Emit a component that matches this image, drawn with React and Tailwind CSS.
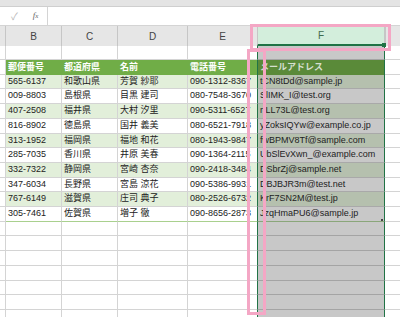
import React from 'react'

const rows = [
  ['565-6137', '和歌山県', '芳賀 紗耶', '090-1312-8367', 'tCN8tDd@sample.jp'],
  ['009-8803', '島根県', '目黒 建司', '080-7548-3670', 'SlIMK_I@test.org'],
  ['407-2508', '福井県', '大村 汐里', '090-5311-6527', 'rtLL73L@test.org'],
  ['816-8902', '徳島県', '国井 義美', '080-6521-7918', 'yZoksIQYw@example.co.jp'],
  ['313-1952', '福岡県', '福地 和花', '080-1943-9847', 'fwBPMV8Tf@sample.com'],
  ['285-7035', '香川県', '井原 美春', '090-1364-2115', 'UbSlEvXwn_@example.com'],
  ['332-7322', '静岡県', '宮崎 杏奈', '090-2418-3484', 'DSbrZj@sample.net'],
  ['347-6034', '長野県', '宮島 涼花', '090-5386-9931', 'DBJBJR3m@test.net'],
  ['767-6149', '滋賀県', '庄司 典子', '080-2526-6732', 'KrF7SN2M@test.jp'],
  ['305-7461', '佐賀県', '増子 徹', '090-8656-2873', 'JzqHmaPU6@sample.jp'],
]

// data row heights (Excel rows are ~14.7px, so alternate 14/15)
const dataH = ['h-[14px]', 'h-[15px]', 'h-[15px]', 'h-[15px]', 'h-[14px]', 'h-[15px]', 'h-[15px]', 'h-[14px]', 'h-[15px]', 'h-[15px]']
const emptyH = ['h-[14px]', 'h-[15px]', 'h-[15px]', 'h-[15px]', 'h-[14px]', 'h-[15px]', 'h-[15px]']

const txt = 'flex shrink-0 items-center overflow-hidden whitespace-nowrap px-[2px]'

function EmptyRow({ h }) {
  return (
    <div className={`flex ${h}`}>
      <div className="w-[6px] shrink-0 border-r border-b border-[#d4d4d4] bg-white" />
      <div className="w-[56px] shrink-0 border-r border-b border-[#d4d4d4] bg-white" />
      <div className="w-[56px] shrink-0 border-r border-b border-[#d4d4d4] bg-white" />
      <div className="w-[70px] shrink-0 border-r border-b border-[#d4d4d4] bg-white" />
      <div className="w-[69px] shrink-0 border-b border-[#d4d4d4] bg-white" />
      <div className="w-[128px] shrink-0 border-x border-b border-x-[#217346] border-b-[#a4a4a4] bg-[#c8c8c8]" />
      <div className="w-[15px] shrink-0 border-b border-[#d4d4d4] bg-white" />
    </div>
  )
}

function DataRow({ r, i }) {
  const green = i % 2 === 0
  const last = i === rows.length - 1
  const bg = green ? 'bg-[#e2efda]' : 'bg-white'
  const bb = last ? 'border-b-[#a9d08e]' : 'border-b-[#d4d4d4]'
  return (
    <div className={`flex ${dataH[i]}`}>
      <div className="w-[6px] shrink-0 border-r border-b border-[#d4d4d4] bg-white" />
      <div className={`${txt} w-[56px] border-r border-b border-r-[#d4d4d4] ${bb} ${bg}`}>{r[0]}</div>
      <div className={`${txt} w-[56px] border-r border-b border-r-[#d4d4d4] ${bb} ${bg}`}>{r[1]}</div>
      <div className={`${txt} w-[70px] border-r border-b border-r-[#d4d4d4] ${bb} ${bg}`}>{r[2]}</div>
      <div className={`${txt} w-[69px] border-b ${bb} ${bg}`}>{r[3]}</div>
      <div
        className={`${txt} w-[128px] border-x border-b border-x-[#217346] ${last ? 'border-b-[#8aa67a]' : 'border-b-[#a9a9a9]'} ${green ? 'bg-[#b5c0ae]' : 'bg-[#c8c8c8]'}`}
      >
        {r[4]}
      </div>
      <div className="w-[15px] shrink-0 border-b border-[#d4d4d4] bg-white" />
    </div>
  )
}

export default function App() {
  return (
    <div className="relative h-[317px] w-[400px] overflow-hidden bg-white font-['Liberation_Sans','Noto_Sans_CJK_JP',sans-serif] text-[9px] text-[#222]">
      {/* ribbon edge */}
      <div className="h-[7px] border-b border-[#cfcfcf] bg-[#e4e4e4]" />

      {/* formula bar */}
      <div className="flex h-[19px] border-b border-[#d4d4d4] bg-white">
        <div className="flex w-[48px] shrink-0 items-center border-r border-[#d4d4d4]">
          <span className="ml-[11px] text-[10px] text-[#b4b4b4]">✓</span>
          <span className="ml-[15px] font-['Liberation_Serif',serif] text-[9px] italic text-[#666]">
            f<span className="text-[7px]">x</span>
          </span>
        </div>
        <div className="flex-1" />
      </div>

      {/* column headers */}
      <div className="flex h-[20px] bg-[#e6e6e6] text-[10px] text-[#444]">
        <div className="w-[6px] shrink-0 border-r border-[#c6c6c6]" />
        <div className="flex w-[56px] shrink-0 items-center justify-center border-r border-[#c6c6c6]">B</div>
        <div className="flex w-[56px] shrink-0 items-center justify-center border-r border-[#c6c6c6]">C</div>
        <div className="flex w-[70px] shrink-0 items-center justify-center border-r border-[#c6c6c6]">D</div>
        <div className="flex w-[69px] shrink-0 items-center justify-center">E</div>
        <div className="flex w-[128px] shrink-0 items-center justify-center border-x border-b-2 border-x-[#c6c6c6] border-b-[#217346] bg-[#d3eedc] text-[#3f6b4f]">
          F
        </div>
        <div className="w-[15px] shrink-0 border-l border-[#c6c6c6]" />
      </div>

      {/* row 1 (blank) */}
      <EmptyRow h="h-[14px]" />

      {/* table header */}
      <div className="flex h-[15px] font-bold text-white">
        <div className="w-[6px] shrink-0 border-r border-b border-[#d4d4d4] bg-white" />
        <div className={`${txt} w-[56px] bg-[#70ad47]`}>郵便番号</div>
        <div className={`${txt} w-[56px] bg-[#70ad47]`}>都道府県</div>
        <div className={`${txt} w-[70px] bg-[#70ad47]`}>名前</div>
        <div className={`${txt} w-[69px] bg-[#70ad47]`}>電話番号</div>
        <div className={`${txt} w-[128px] border-x border-x-[#217346] bg-[#5a8a39] text-[#d5dfcf]`}>メールアドレス</div>
        <div className="w-[15px] shrink-0 border-b border-[#d4d4d4] bg-white" />
      </div>

      {rows.map((r, i) => (
        <DataRow key={i} r={r} i={i} />
      ))}

      {emptyH.map((h, i) => (
        <EmptyRow key={i} h={h} />
      ))}

      {/* selection handles */}
      <div className="absolute left-[382px] top-[43px] h-[4px] w-[4px] bg-[#217346]" />
      <div className="absolute left-[381px] top-[219px] h-[2px] w-[2px] bg-[#444]" />

      {/* pink annotation frames */}
      <div className="absolute left-[250px] top-[24px] h-[27px] w-[141px] border-[3px] border-[#f4a7c5]" />
      <div className="absolute left-[247px] top-[49px] h-[266px] w-[19px] border-[3px] border-[#f4a7c5]" />
    </div>
  )
}
